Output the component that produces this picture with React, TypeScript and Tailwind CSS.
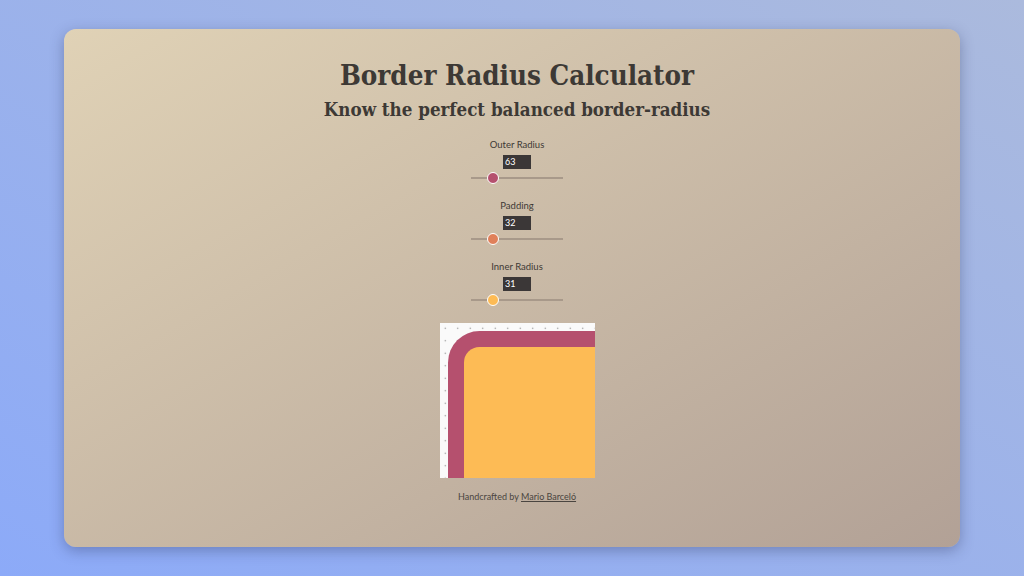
import { useState } from "react";

const serif = { fontFamily: '"DejaVu Serif", serif' };

function Control({
  label,
  value,
  max,
  color,
  onChange,
}: {
  label: string;
  value: number;
  max: number;
  color: string;
  onChange: (v: number) => void;
}) {
  return (
    <div className="flex flex-col items-center">
      <label className="text-[9.5px] leading-[14px] text-[#3d3935]">{label}</label>
      <div className="mt-[3px] w-[28px] h-[14px] bg-[#3b3737] text-white text-[9px] leading-[14px] px-[2px]">
        {value}
      </div>
      <input
        type="range"
        min={0}
        max={max}
        value={value}
        onChange={(e) => onChange(Number(e.target.value))}
        className={`mt-[2px] w-[92px] h-[14px] appearance-none bg-transparent cursor-pointer [&::-webkit-slider-runnable-track]:h-[2px] [&::-webkit-slider-runnable-track]:bg-[#a8998a] [&::-webkit-slider-thumb]:appearance-none [&::-webkit-slider-thumb]:w-[12px] [&::-webkit-slider-thumb]:h-[12px] [&::-webkit-slider-thumb]:rounded-full [&::-webkit-slider-thumb]:border-[1.5px] [&::-webkit-slider-thumb]:border-white [&::-webkit-slider-thumb]:mt-[-5px] ${color}`}
      />
    </div>
  );
}

export default function App() {
  const [outer, setOuter] = useState(63);
  const [padding, setPadding] = useState(32);
  const inner = Math.max(outer - padding, 0);

  return (
    <div className="w-[1024px] h-[576px] flex items-center justify-center bg-[linear-gradient(to_top_right,#8caaf8,#abbadd)]">
      <div
        className="w-[896px] h-[518px] pl-[10px] rounded-[12px] shadow-[0_4px_14px_rgba(40,50,90,0.35)] bg-[linear-gradient(to_bottom_right,#e0d2b6,#b2a196)] flex flex-col items-center text-[#3d3935]"
        style={{ fontFamily: 'Lato, "Open Sans", sans-serif' }}
      >
        <h1 className="mt-[27px] text-[27.5px] leading-[38px] font-bold font-stretch-condensed" style={serif}>
          Border Radius Calculator
        </h1>
        <h2 className="mt-[1px] text-[18.6px] leading-[30px] font-bold font-stretch-condensed" style={serif}>
          Know the perfect balanced border-radius
        </h2>

        <div className="mt-[13px] flex flex-col gap-[14px]">
          <Control
            label="Outer Radius"
            value={outer}
            max={315}
            color="[&::-webkit-slider-thumb]:bg-[#b5506e]"
            onChange={setOuter}
          />
          <Control
            label="Padding"
            value={padding}
            max={160}
            color="[&::-webkit-slider-thumb]:bg-[#e0805a]"
            onChange={setPadding}
          />
          <Control
            label="Inner Radius"
            value={inner}
            max={155}
            color="[&::-webkit-slider-thumb]:bg-[#fdbb55]"
            onChange={() => {}}
          />
        </div>

        <div className="mt-[16px] w-[155px] h-[155px] overflow-hidden bg-[#fafafa] bg-[radial-gradient(circle,#8a8a8a_0.7px,transparent_1px)] bg-[length:12.5px_12.5px] bg-[position:-1px_-1px] pl-[8px] pt-[8px]">
          <div
            className="w-[200px] h-[200px] bg-[#b5506e]"
            style={{ borderTopLeftRadius: outer / 2, padding: padding / 2 }}
          >
            <div className="w-full h-full bg-[#fdbb55]" style={{ borderTopLeftRadius: inner / 2 }} />
          </div>
        </div>

        <p className="mt-[12px] text-[9px] leading-[14px] text-[#4a4540]">
          Handcrafted by{" "}
          <a href="#" className="underline">
            Mario Barceló
          </a>
        </p>
      </div>
    </div>
  );
}
